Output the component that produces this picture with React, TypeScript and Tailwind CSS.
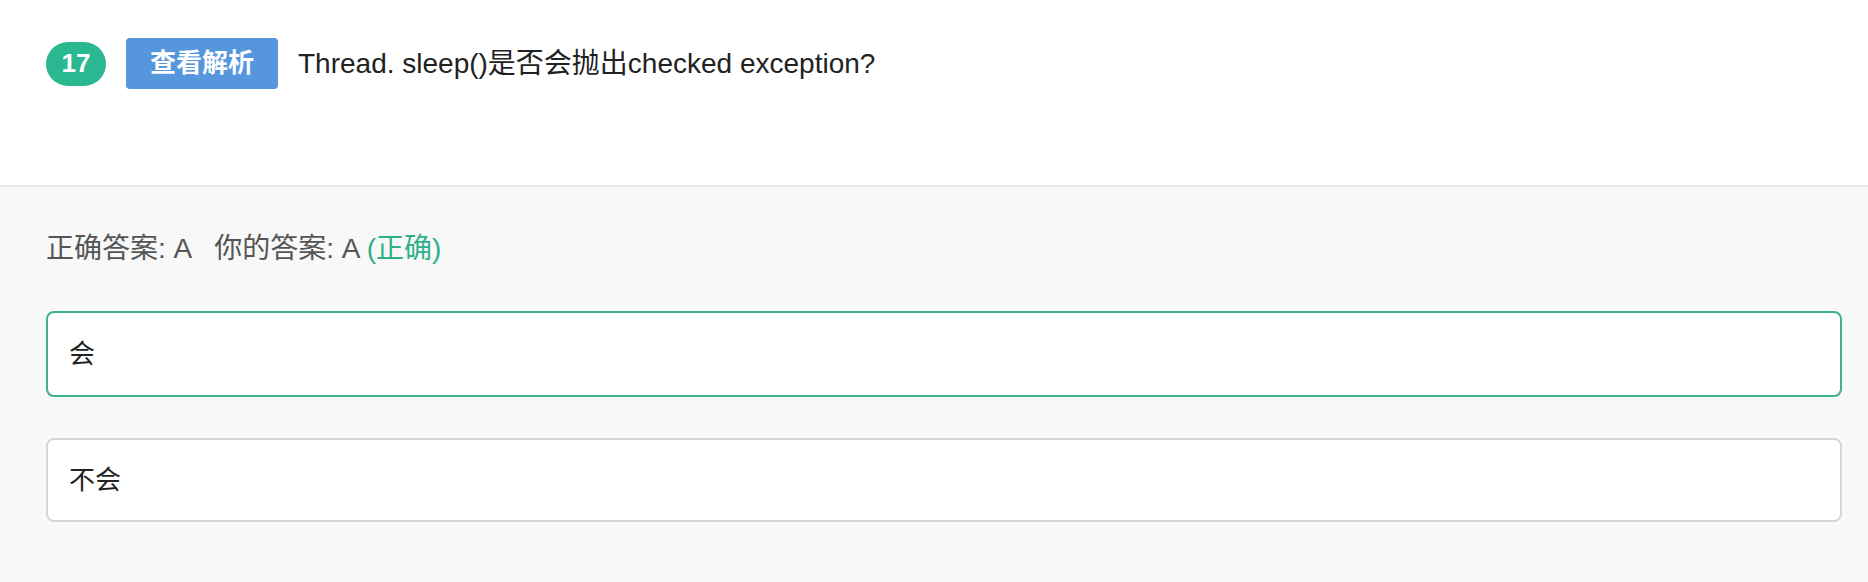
export default function App() {
  const font = { fontFamily: '"Liberation Sans", "Noto Sans CJK SC", sans-serif' };
  return (
    <div className="w-[1868px] h-[582px] bg-[#f8f8f8] flex flex-col" style={font}>
      <div className="h-[187px] bg-white border-b-2 border-[#e8e8e8] pl-[46px] pt-[38px]">
        <div className="flex items-center h-[51px]">
          <div className="w-[60px] h-[44px] rounded-full bg-[#2bb891] text-white text-[26px] font-bold flex items-center justify-center">17</div>
          <div className="ml-[20px] w-[152px] h-[51px] rounded-[4px] bg-[#5596dd] text-white text-[26px] font-semibold flex items-center justify-center">查看解析</div>
          <div className="ml-[20px] text-[28px] text-[#222]">Thread. sleep()是否会抛出checked exception?</div>
        </div>
      </div>
      <div className="pl-[46px] pr-[26px] pt-[47px]">
        <div className="text-[28px] text-[#555] h-[30px] leading-[30px]">
          正确答案: A<span className="ml-[22px]">你的答案: A</span> <span className="text-[#2fb08b]">(正确)</span>
        </div>
        <div className="mt-[47px] h-[86px] rounded-[8px] border-2 border-[#3cb393] bg-white flex items-center pl-[21px] text-[26px] text-[#222]">会</div>
        <div className="mt-[41px] h-[84px] rounded-[8px] border-2 border-[#d5d5d5] bg-white flex items-center pl-[21px] text-[26px] text-[#222]">不会</div>
      </div>
    </div>
  );
}
